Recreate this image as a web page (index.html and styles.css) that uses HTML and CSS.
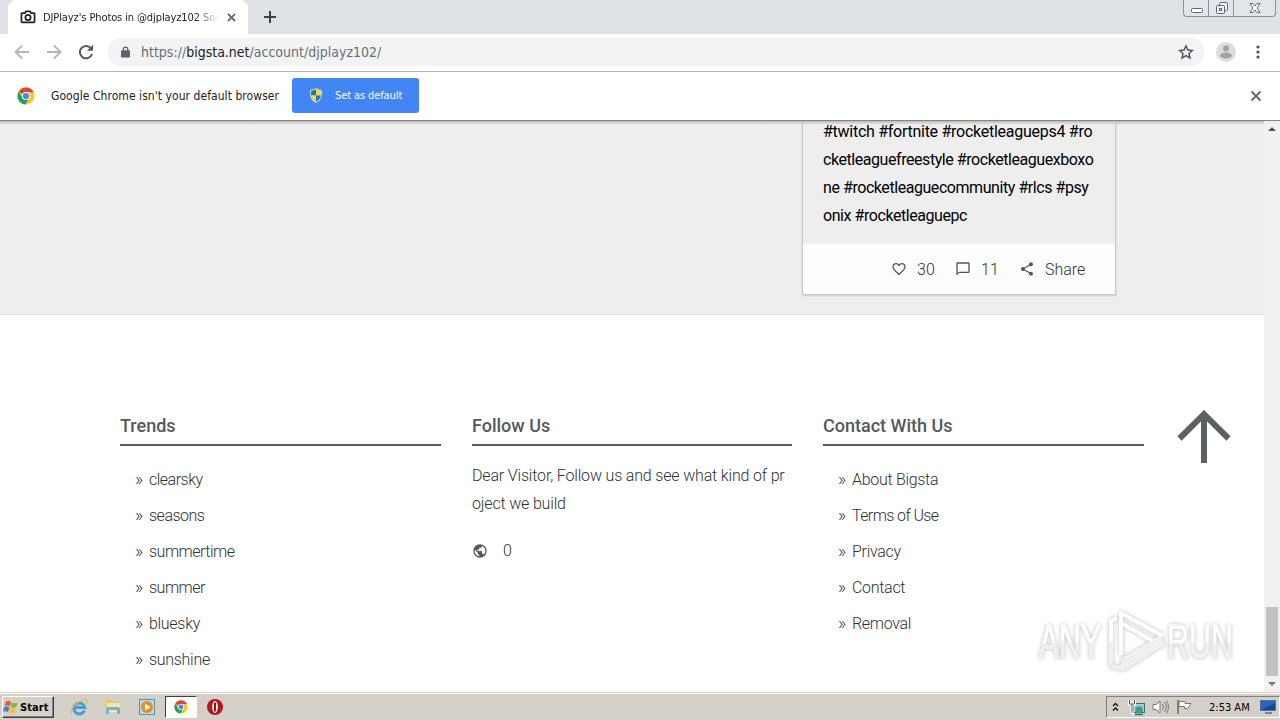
FILE: index.html
```
<!DOCTYPE html>
<html>
<head>
    <meta charset="utf-8">
    <title>DJPlayz's Photos in @djplayz102</title>
    <link rel="stylesheet" href="styles.css">
</head>
<body>
    <svg class="defs" width="0" height="0">
        <symbol id="chrome" viewBox="0 0 18 18">
            <circle cx="9" cy="9" r="8.5" fill="#f9c72c"/>
            <path d="M9 9 1.6 4.8A8.5 8.5 0 0 1 16.7 5.2H9z" fill="#dc4437"/>
            <path d="M1.6 4.8A8.5 8.5 0 0 0 8.3 17.5L12.2 11 9 9 5.5 10.8z" fill="#1ea362"/>
            <circle cx="9" cy="9" r="4" fill="#fff"/>
            <circle cx="9" cy="9" r="3.1" fill="#4587f3"/>
        </symbol>
    </svg>

    <div class="tabs">
        <div class="tab">
            <svg class="camera" width="16" height="14" viewBox="0 0 18 16" fill="none" stroke="#222" stroke-width="2"><path d="M2.5 3.500h3l1.200-2h4.600l1.200 2h3a1 1 0 0 1 1 1v8.700a1 1 0 0 1-1 1h-13a1 1 0 0 1-1-1V4.500a1 1 0 0 1 1-1z"/><circle cx="9" cy="8.500" r="3"/></svg>
            <div class="tab-title">DJPlayz's Photos in @djplayz102 Soc</div>
            <svg width="9" height="9" viewBox="0 0 10 10" stroke="#5f6368" stroke-width="1.900"><path d="M1 1l8 8M9 1L1 9"/></svg>
        </div>
        <svg class="plus" width="12" height="12" viewBox="0 0 12 12" stroke="#3c4043" stroke-width="2"><path d="M6 0v12M0 6h12"/></svg>
        <div class="window-buttons">
            <div class="min"><svg width="13" height="17"><rect x="1.500" y="8.500" width="11" height="4" rx="1" fill="#fff" stroke="#606674"/></svg></div>
            <div class="max"><svg width="13" height="17" fill="#eef0f4" stroke="#606674"><rect x="4.500" y="2.500" width="8" height="8" rx="1"/><rect x="1.500" y="5.500" width="8" height="8" rx="1"/><rect x="4.500" y="8.500" width="2" height="2"/></svg></div>
            <div class="close"><svg width="12" height="17" fill="#fff" stroke="#606674"><path d="M1 3.500h3l2 2.500 2-2.500h3L8 8l3 4.500H8L6 10l-2 2.500H1L4 8z"/></svg></div>
        </div>
    </div>

    <div class="toolbar">
        <svg width="16" height="16" viewBox="0 0 16 16" fill="none" stroke="#b4b6b9" stroke-width="1.800"><path d="M15 8H2M8 1.500L1.500 8 8 14.500"/></svg>
        <svg width="16" height="16" viewBox="0 0 16 16" fill="none" stroke="#b4b6b9" stroke-width="1.800"><path d="M1 8h13M8 1.500L14.500 8 8 14.500"/></svg>
        <svg width="16" height="16" viewBox="0 0 16 16"><path d="M13 4.300A6.200 6.200 0 1 0 14 10" fill="none" stroke="#55585c" stroke-width="2"/><path d="M15 .8v6H9z" fill="#55585c"/></svg>
        <div class="address">
            <svg width="9" height="12" viewBox="0 0 10 13"><rect y="4.500" width="10" height="8" rx="1" fill="#5f6368"/><path d="M2.500 5V3.500a2.500 2.500 0 0 1 5 0V5" fill="none" stroke="#5f6368" stroke-width="1.400"/></svg>
            <div class="url">https://<b>bigsta.net</b>/account/djplayz102/</div>
            <svg class="star" width="16" height="16" viewBox="0 0 16 16"><path d="M8 1.800l1.900 4.200 4.500.5-3.400 3 1 4.500-4-2.400L4 14l1-4.500-3.400-3 4.500-.5z" fill="none" stroke="#4d5156" stroke-width="1.400"/></svg>
        </div>
        <svg class="avatar" width="20" height="20" viewBox="0 0 20 20"><circle cx="10" cy="10" r="10" fill="#dcdcdc"/><circle cx="10" cy="6.500" r="3" fill="#a2a2a2"/><ellipse cx="10" cy="13.500" rx="6" ry="3" fill="#a2a2a2"/></svg>
        <svg class="dots" width="4" height="14" viewBox="0 0 4 14" fill="#4d5156"><circle cx="2" cy="2" r="1.600"/><circle cx="2" cy="7" r="1.600"/><circle cx="2" cy="12" r="1.600"/></svg>
    </div>

    <div class="infobar">
        <svg width="18" height="18"><use href="#chrome"/></svg>
        <div class="info-text">Google Chrome isn't your default browser</div>
        <div class="set-default">
            <svg width="14" height="15" viewBox="0 0 14 16"><path d="M7 0l6.500 2.500v5Q13 13 7 16 1 13 .5 7.500v-5z" fill="#c3ccc4"/><path d="M7 1.500v6.500H1.800V3.300z" fill="#2470bd"/><path d="M7 1.500v6.500h5.200V3.300z" fill="#fbd63b"/><path d="M7 8v6.500Q2.500 12 1.800 8z" fill="#fbd63b"/><path d="M7 8v6.500Q11.500 12 12.200 8z" fill="#2470bd"/></svg>
            <span>Set as default</span>
        </div>
        <svg class="info-close" width="10" height="10" viewBox="0 0 10 10" stroke="#5f6368" stroke-width="1.900"><path d="M.5.5l9 9M9.500.5l-9 9"/></svg>
    </div>

    <div class="view">
        <div class="page">
            <div class="posts">
                <div class="card">
                    <div class="tags">
                        <div class="l1">#twitch #fortnite #rocketleagueps4 #ro</div>
                        <div class="l2">cketleaguefreestyle #rocketleaguexboxo</div>
                        <div class="l3">ne #rocketleaguecommunity #rlcs #psy</div>
                        <div class="l4">onix #rocketleaguepc</div>
                    </div>
                    <div class="actions">
                        <svg width="16" height="16" viewBox="0 0 24 24" fill="#555"><path d="M16.500 3c-1.740 0-3.410.81-4.500 2.090C10.910 3.810 9.240 3 7.500 3 4.420 3 2 5.420 2 8.500c0 3.780 3.400 6.860 8.550 11.540L12 21.350l1.450-1.320C18.600 15.360 22 12.280 22 8.500 22 5.420 19.580 3 16.500 3zm-4.400 15.550l-.1.100-.1-.100C7.140 14.240 4 11.390 4 8.500 4 6.500 5.500 5 7.500 5c1.540 0 3.040.99 3.570 2.360h1.870C13.460 5.990 14.960 5 16.500 5c2 0 3.500 1.500 3.500 3.500 0 2.890-3.140 5.740-7.900 10.050z"/></svg>
                        <span class="likes">30</span>
                        <svg width="16" height="16" viewBox="0 0 24 24" fill="#555"><path d="M20 2H4c-1.100 0-2 .9-2 2v18l4-4h14c1.100 0 2-.9 2-2V4c0-1.100-.9-2-2-2zm0 14H6l-2 2V4h16v12z"/></svg>
                        <span class="comments">11</span>
                        <svg width="16" height="16" viewBox="0 0 24 24" fill="#555"><path d="M18 16.080c-.76 0-1.440.3-1.960.77L8.910 12.700c.05-.23.09-.46.09-.7s-.04-.47-.09-.7l7.050-4.110c.54.5 1.250.81 2.040.81 1.660 0 3-1.340 3-3s-1.340-3-3-3-3 1.340-3 3c0 .24.04.47.09.7L8.040 9.810C7.500 9.310 6.790 9 6 9c-1.660 0-3 1.340-3 3s1.340 3 3 3c.79 0 1.500-.31 2.040-.81l7.120 4.160c-.05.21-.08.43-.08.65 0 1.610 1.310 2.920 2.920 2.920s2.920-1.310 2.920-2.920-1.310-2.920-2.920-2.920z"/></svg>
                        <span class="share">Share</span>
                    </div>
                </div>
            </div>

            <div class="footer">
                <div class="col trends">
                    <h3>Trends</h3>
                    <ul>
                        <li>clearsky</li>
                        <li>seasons</li>
                        <li>summertime</li>
                        <li>summer</li>
                        <li>bluesky</li>
                        <li>sunshine</li>
                    </ul>
                </div>
                <div class="col follow">
                    <h3>Follow Us</h3>
                    <p>Dear Visitor, Follow us and see what kind of pr<br>oject we build</p>
                    <div class="world">
                        <svg width="16" height="16" viewBox="0 0 24 24" fill="#555a5c"><path d="M12 2C6.480 2 2 6.480 2 12s4.480 10 10 10 10-4.480 10-10S17.520 2 12 2zm-1 17.930c-3.950-.49-7-3.850-7-7.930 0-.62.08-1.210.21-1.790L9 15v1c0 1.100.9 2 2 2v1.930zm6.900-2.540c-.26-.81-1-1.390-1.900-1.390h-1v-3c0-.55-.45-1-1-1H8v-2h2c.55 0 1-.45 1-1V7h2c1.100 0 2-.9 2-2v-.41c2.930 1.190 5 4.060 5 7.410 0 2.080-.8 3.970-2.100 5.390z"/></svg>
                        <span>0</span>
                    </div>
                </div>
                <div class="col contact">
                    <h3>Contact With Us</h3>
                    <ul>
                        <li>About Bigsta</li>
                        <li>Terms of Use</li>
                        <li>Privacy</li>
                        <li>Contact</li>
                        <li>Removal</li>
                    </ul>
                </div>
            </div>
            <svg class="to-top" width="54" height="53" viewBox="0 0 54 53" fill="none" stroke="#5c6163" stroke-width="6"><path d="M27 53V5M2.500 28.500L27 4.200 51.500 28.500"/></svg>
        </div>
        <div class="scrollbar">
            <div class="up"></div>
            <div class="thumb"></div>
            <div class="down"></div>
        </div>
    </div>

    <div class="taskbar">
        <div class="start">
            <svg width="16" height="16" viewBox="0 0 16 16"><path d="M3 2.500Q5.500 1 8 3L6.700 7.500Q4.500 6 1.600 7z" fill="#e8592b"/><path d="M8.800 3.400Q11.500 5 14.700 3.400L13.300 8Q10.300 9.400 7.500 7.800z" fill="#7db83a"/><path d="M1.300 8Q4 7 6.400 8.600L5 13Q2.700 11.500 0 12.600z" fill="#3b7fd4"/><path d="M7.200 8.900Q10 10.500 13 9.100L11.600 13.600Q8.500 15 5.800 13.400z" fill="#f5c02c"/></svg>
            <span>Start</span>
        </div>
        <div class="launch">
            <svg width="18" height="18" viewBox="0 0 18 18" fill="none"><path d="M14.500 12.500A5.500 5.500 0 1 1 14.800 9.500H5.500" stroke="#3d9fe0" stroke-width="3"/><path d="M2 16Q-1 12 7 5.500T17 2.500q.6 1-.8 3" stroke="#e9b93c" stroke-width="1.200"/></svg>
            <svg width="18" height="18" viewBox="0 0 18 18"><path d="M2 2h6l1 2h7v5H2z" fill="#e8c35e"/><path d="M3 5h13v9H3z" fill="#f9e8a4"/><path d="M2 16v-5q0-2 2-2h10q2 0 2 2v5h-3v-4H5v4z" fill="#6db5df"/></svg>
            <svg width="18" height="18" viewBox="0 0 18 18"><rect x="1.500" y="1.500" width="15" height="15" fill="#b7d8f2" stroke="#4e94cc"/><circle cx="9" cy="9" r="6" fill="#f08a1c"/><path d="M7 5.500l5.500 3.500L7 12.500z" fill="#fff"/></svg>
            <div class="active"><svg width="14" height="14"><use href="#chrome"/></svg></div>
            <svg width="18" height="18" viewBox="0 0 18 18"><circle cx="9" cy="9" r="8" fill="#b5161b"/><ellipse cx="9" cy="9" rx="2.800" ry="6" fill="#fff"/><rect x="8" y="4.500" width="2" height="9" fill="#9c1014"/></svg>
        </div>
        <div class="tray">
            <svg width="7" height="10" viewBox="0 0 7 10" fill="none" stroke="#111" stroke-width="1.400"><path d="M1 4l2.500-2.500L6 4M1 8.500L3.500 6 6 8.500"/></svg>
            <svg class="net" width="17" height="17" viewBox="0 0 17 17"><rect x="5.500" y="4.500" width="11" height="9" fill="#a4c8d8" stroke="#4a6672"/><path d="M7 15.500h8" stroke="#4a6672" stroke-width="1.500"/><circle cx="11" cy="11" r="3.800" fill="#3c9e80"/><path d="M1.500 1v4h5V1M4 5v9h2" fill="none" stroke="#fff" stroke-width="3"/><path d="M1.500 1v4h5V1M4 5v9" fill="none" stroke="#555"/></svg>
            <svg class="sound" width="17" height="16" viewBox="0 0 17 16" fill="none" stroke="#777"><path d="M1 5.500h3L8 2v12L4 10.500H1z" fill="#fff"/><path d="M10.500 5q2 3 0 6M12.500 3q3.500 5 0 10M14.500 1.500q4 6.500 0 13"/></svg>
            <svg class="flag" width="17" height="16" viewBox="0 0 17 16"><path d="M2 1v14" stroke="#666" stroke-width="1.500"/><path d="M3 2.500h6v2h6l-3 5H8.500v-2H3z" fill="#fff" stroke="#777"/></svg>
            <div class="clock">2:53 AM</div>
            <svg class="desk" width="16" height="14" viewBox="0 0 16 14"><path d="M.5.5h15v10H.5z" fill="#2667c0" stroke="#4b7496"/><path d="M1 10L15 3v7z" fill="#174797"/><path d="M5 13h7" stroke="#6f8796" stroke-width="2"/></svg>
        </div>
    </div>

    <svg class="watermark" width="214" height="72" viewBox="0 0 214 72">
        <defs>
            <linearGradient id="fade" gradientUnits="userSpaceOnUse" x1="0" y1="38" x2="0" y2="39">
                <stop offset="0" stop-color="#fff"/>
                <stop offset="1" stop-color="#f0f0f0"/>
            </linearGradient>
        </defs>
        <g fill="url(#fade)" stroke="url(#fade)" stroke-width="1" font-family="Liberation Sans Narrow, Liberation Sans" font-size="49">
            <text x="5" y="54" textLength="62" lengthAdjust="spacingAndGlyphs">ANY</text>
            <text x="133" y="54" textLength="66" lengthAdjust="spacingAndGlyphs">RUN</text>
        </g>
        <g fill="none" stroke-width="4" stroke-linejoin="round">
            <path d="M77 38v24l7 2 45-28M87 57l40-24" stroke="#f0f0f0"/>
            <path d="M87 66l43-27" stroke="#f0f0f0"/>
            <path d="M87 51V9l42 23M83 14l-6 3v21" stroke="#fff"/>
            <path d="M87 24v25M87 19l32 18" stroke="#fff"/>
        </g>
    </svg>
</body>
</html>
```
FILE: styles.css
```
body {
    margin: 0;
    width: 1280px;
    height: 720px;
    overflow: hidden;
    display: flex;
    flex-direction: column;
    background: #fff;
    font-family: "DejaVu Sans Condensed", "DejaVu Sans", sans-serif;
    font-size: 11px;
    color: #222;
}
svg {
    flex: none;
    display: block;
}
.defs {
    position: absolute;
}
span, .url, .info-text, .clock, .tags div, li, p, h3 {
    white-space: nowrap;
}

/* browser */
.tabs {
    height: 34px;
    flex: none;
    display: flex;
    background: #dee1e6;
}
.tab {
    width: 240px;
    margin-left: 8px;
    padding: 0 12px;
    box-sizing: border-box;
    display: flex;
    align-items: center;
    background: #fff;
    border-radius: 8px 8px 0 0;
}
.tab-title {
    width: 178px;
    margin: 0 6px 0 7px;
    overflow: hidden;
    white-space: nowrap;
    letter-spacing: -0.1px;
    -webkit-mask-image: linear-gradient(to right, #000 152px, transparent 176px);
}
.plus {
    margin: 11px 0 0 16px;
}
.window-buttons {
    height: 16px;
    margin: 0 4px 0 auto;
    display: flex;
    border: 1px solid #8a90a0;
    border-top: 0;
    border-radius: 0 0 4px 4px;
    background: #e2e5ea;
}
.window-buttons div {
    width: 24px;
    display: flex;
    justify-content: center;
}
.window-buttons .max {
    border-left: 1px solid #8a90a0;
    border-right: 1px solid #8a90a0;
}
.window-buttons .close {
    width: 41px;
}
.toolbar {
    height: 37px;
    box-sizing: border-box;
    flex: none;
    padding: 0 20px 2px 14px;
    display: flex;
    align-items: center;
    gap: 16px;
}
.address {
    flex: 1;
    height: 28px;
    margin-left: -2px;
    padding: 0 10px 0 13px;
    display: flex;
    align-items: center;
    border-radius: 14px;
    background: #f1f3f4;
}
.url {
    margin-left: 11px;
    font-size: 14px;
    color: #6b6f74;
}
.url b {
    font-weight: normal;
    color: #202124;
}
.star {
    margin-left: auto;
}
.avatar {
    margin: 0 4px 0 -4px;
}
.infobar {
    height: 50px;
    box-sizing: border-box;
    flex: none;
    display: flex;
    align-items: center;
    padding: 0 19px 0 17px;
    border-top: 1px solid #b6b6b6;
    border-bottom: 1px solid #858585;
}
.info-text {
    margin-left: 16px;
    width: 229px;
    font-size: 12px;
    letter-spacing: 0.06px;
}
.set-default {
    width: 127px;
    height: 35px;
    margin: -1px 0 0 12px;
    box-sizing: border-box;
    padding-left: 17px;
    display: flex;
    align-items: center;
    gap: 12px;
    border-radius: 3px;
    background: #4285f4;
    color: #fff;
    letter-spacing: -0.1px;
}
.info-close {
    margin-left: auto;
}

/* page */
.view {
    height: 571px;
    flex: none;
    display: flex;
}
.page {
    width: 1264px;
    position: relative;
    font-family: Roboto, sans-serif;
    font-size: 16px;
    font-weight: 300;
    letter-spacing: -0.17px;
    color: #2e3234;
}
.posts {
    height: 194px;
    box-sizing: border-box;
    padding: 0 148px 19px 0;
    display: flex;
    justify-content: flex-end;
    align-items: flex-end;
    overflow: hidden;
    background: linear-gradient(#bbb, #eee 4px);
    border-bottom: 1px solid #e2e2e2;
}
.card {
    width: 312px;
    border: 1px solid #c8c8c8;
    box-shadow: 0 1px 2px #ccc;
}
.tags {
    padding: 10px 20px 14px;
    line-height: 28px;
    font-weight: 400;
    letter-spacing: -0.44px;
    color: #000;
}
.tags .l1 {
    letter-spacing: -0.27px;
}
.actions {
    height: 50px;
    padding-left: 88px;
    display: flex;
    align-items: center;
    background: #fdfdfd;
    letter-spacing: 0;
}
.actions span {
    margin-left: 10px;
    width: 38px;
}
.footer {
    padding: 96px 0 0 120px;
    display: grid;
    grid-template-columns: 321px 320px 321px;
    gap: 31px;
}
.col h3 {
    margin: 0;
    height: 33px;
    line-height: 30px;
    font-size: 18px;
    font-weight: 500;
    letter-spacing: 0;
    color: #55595b;
    border-bottom: 2px solid #585c5e;
}
.col ul {
    margin: 16px 0 0;
    padding: 0 0 0 15px;
    list-style: none;
}
.col li {
    height: 36px;
    line-height: 34px;
    letter-spacing: -0.3px;
}
.trends li:nth-child(-n+4) {
    letter-spacing: -0.5px;
}
.contact li:nth-child(2) {
    letter-spacing: -0.6px;
}
.col li:before {
    content: "»";
    display: inline-block;
    width: 14px;
    font-size: 18px;
}
.col p {
    margin: 16px 0 0;
    line-height: 28px;
}
.world {
    margin-top: 23px;
    display: flex;
    align-items: center;
    gap: 15px;
}
.to-top {
    position: absolute;
    left: 1177px;
    top: 289px;
}
.scrollbar {
    width: 16px;
    display: flex;
    flex-direction: column;
    align-items: center;
    background: #f1f1f1;
}
.up, .down {
    border: 4px solid transparent;
    border-top-width: 0;
    border-bottom: 4px solid #505050;
    margin-top: 6px;
}
.down {
    border-top: 4px solid #777;
    border-bottom: 0;
}
.thumb {
    width: 12px;
    height: 69px;
    margin-top: 476px;
    background: #c1c1c1;
}

/* taskbar */
.taskbar {
    height: 28px;
    box-sizing: border-box;
    border-top: 1px solid #d4d0c8;
    box-shadow: inset 0 1px 0 #fff;
    padding: 3px 0 1px 2px;
    display: flex;
    background: #d4d0c8;
    color: #000;
}
.start {
    width: 52px;
    height: 22px;
    box-sizing: border-box;
    display: flex;
    align-items: center;
    border: 1px solid;
    border-color: #fff #404040 #404040 #fff;
    box-shadow: inset -1px -1px #808080;
    font-weight: bold;
    letter-spacing: 0.1px;
}
.start span {
    margin-left: 1px;
}
.launch {
    height: 22px;
    margin-left: 16px;
    display: flex;
    align-items: center;
    gap: 16px;
}
.launch .active {
    width: 30px;
    height: 20px;
    margin: 0 -7px 0 -7px;
    display: flex;
    justify-content: center;
    align-items: center;
    border: 1px solid;
    border-color: #404040 #fff #fff #404040;
    background: #fff;
}
.tray {
    width: 174px;
    height: 22px;
    box-sizing: border-box;
    margin-left: auto;
    padding-left: 5px;
    display: flex;
    align-items: center;
    border: 1px solid;
    border-color: #808080 #fff #fff #808080;
}
.net {
    margin-left: 9px;
}
.sound, .flag {
    margin-left: 7px;
}
.clock {
    width: 42px;
    margin-left: 16px;
}
.desk {
    margin-left: 9px;
}

.watermark {
    position: absolute;
    left: 1034px;
    top: 604px;
    filter: drop-shadow(0 0 2px #bbb);
}
```
